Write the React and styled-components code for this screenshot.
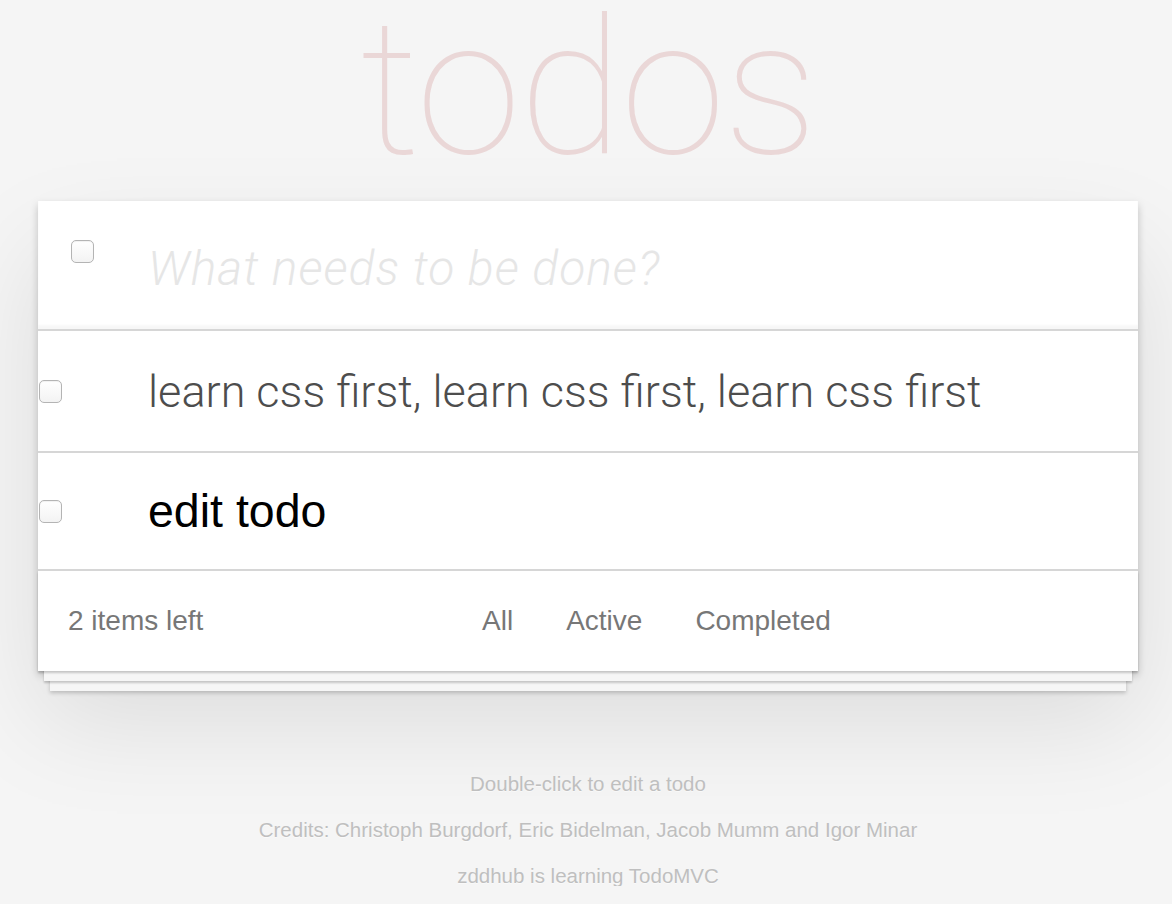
import React, { useState } from "react";
import styled, { createGlobalStyle } from "styled-components";

const GlobalStyle = createGlobalStyle`
  html, body {
    margin: 0;
    padding: 0;
    background: #f5f5f5;
  }
  body {
    font-family: "Liberation Sans", Arial, sans-serif;
    color: #4d4d4d;
  }
`;

const Page = styled.div`
  width: 1100px;
  margin: 0 0 0 38px;
`;

const Title = styled.h1`
  margin: 0;
  height: 201px;
  font-family: Roboto, "Liberation Sans", sans-serif;
  font-size: 190px;
  font-weight: 100;
  line-height: 176px;
  text-align: center;
  color: rgba(175, 47, 47, 0.15);
  letter-spacing: -2px;
`;

const Card = styled.section`
  background: #fff;
  box-shadow: 0 4px 8px 0 rgba(0, 0, 0, 0.2), 0 50px 100px 0 rgba(0, 0, 0, 0.1);
`;

const Header = styled.header`
  display: flex;
  align-items: flex-start;
  height: 128px;
  border-bottom: 2px solid #d6d6d6;
  box-shadow: inset 0 -4px 2px rgba(0, 0, 0, 0.03);
`;

const Check = styled.input.attrs({ type: "checkbox" })`
  appearance: none;
  flex: 0 0 auto;
  width: 23px;
  height: 23px;
  margin: ${(p) => p.$margin || "0"};
  border: 1px solid #b4b4b4;
  border-radius: 5px;
  background: linear-gradient(#ffffff, #f3f3f3);
  box-shadow: inset 0 1px 1px rgba(0, 0, 0, 0.06);
  box-sizing: border-box;
`;

const NewTodo = styled.input`
  flex: 1;
  border: none;
  outline: none;
  background: transparent;
  margin: 38px 0 0 54px;
  padding: 0;
  height: 58px;
  font-family: Roboto, "Liberation Sans", sans-serif;
  font-size: 48px;
  font-weight: 300;
  letter-spacing: 1px;
  color: #4d4d4d;
  &::placeholder {
    font-style: italic;
    color: #e6e6e6;
  }
`;

const Item = styled.li`
  display: flex;
  align-items: center;
  height: ${(p) => p.$h}px;
  border-bottom: 2px solid #d6d6d6;
`;

const List = styled.ul`
  list-style: none;
  margin: 0;
  padding: 0;
`;

const Label = styled.label`
  margin-left: 86px;
  font-family: Roboto, "Liberation Sans", sans-serif;
  font-size: 45px;
  font-weight: 300;
  color: #4d4d4d;
  white-space: nowrap;
`;

const Edit = styled.input`
  margin-left: 86px;
  padding: 0;
  border: none;
  outline: none;
  background: transparent;
  font-family: "Liberation Sans", Arial, sans-serif;
  font-size: 46.5px;
  color: #000;
  width: 800px;
`;

const Footer = styled.footer`
  display: flex;
  align-items: center;
  height: 100px;
  padding-left: 30px;
  font-size: 28px;
  color: #777;
  box-shadow: 0 2px 2px rgba(0, 0, 0, 0.2), 0 16px 0 -6px #f6f6f6,
    0 18px 2px -6px rgba(0, 0, 0, 0.2), 0 32px 0 -12px #f6f6f6,
    0 34px 4px -12px rgba(0, 0, 0, 0.2);
`;

const Count = styled.span`
  flex: 0 0 414px;
`;

const Filters = styled.ul`
  display: flex;
  gap: 53px;
  list-style: none;
  margin: 0;
  padding: 0;
`;

const FilterLink = styled.a`
  color: #777;
  text-decoration: none;
  cursor: pointer;
`;

const Info = styled.footer`
  display: flex;
  flex-direction: column;
  align-items: center;
  gap: 26px;
  margin-top: 103px;
  font-size: 20.5px;
  line-height: 20px;
  color: #bfbfbf;
  text-shadow: 0 1px 0 rgba(255, 255, 255, 0.5);
  p {
    margin: 0;
  }
`;

export default function App() {
  const [text, setText] = useState("");
  const [editing, setEditing] = useState("edit todo");

  return (
    <>
      <GlobalStyle />
      <Page>
        <Title>todos</Title>
        <Card>
          <Header>
            <Check $margin="39px 0 0 33px" />
            <NewTodo
              placeholder="What needs to be done?"
              value={text}
              onChange={(e) => setText(e.target.value)}
            />
          </Header>
          <List>
            <Item $h={120}>
              <Check $margin="0 0 0 1px" />
              <Label>learn css first, learn css first, learn css first</Label>
            </Item>
            <Item $h={116}>
              <Check $margin="0 0 0 1px" />
              <Edit value={editing} onChange={(e) => setEditing(e.target.value)} />
            </Item>
          </List>
          <Footer>
            <Count>2 items left</Count>
            <Filters>
              <li><FilterLink>All</FilterLink></li>
              <li><FilterLink>Active</FilterLink></li>
              <li><FilterLink>Completed</FilterLink></li>
            </Filters>
          </Footer>
        </Card>
        <Info>
          <p>Double-click to edit a todo</p>
          <p>Credits: Christoph Burgdorf, Eric Bidelman, Jacob Mumm and Igor Minar</p>
          <p>zddhub is learning TodoMVC</p>
        </Info>
      </Page>
    </>
  );
}
